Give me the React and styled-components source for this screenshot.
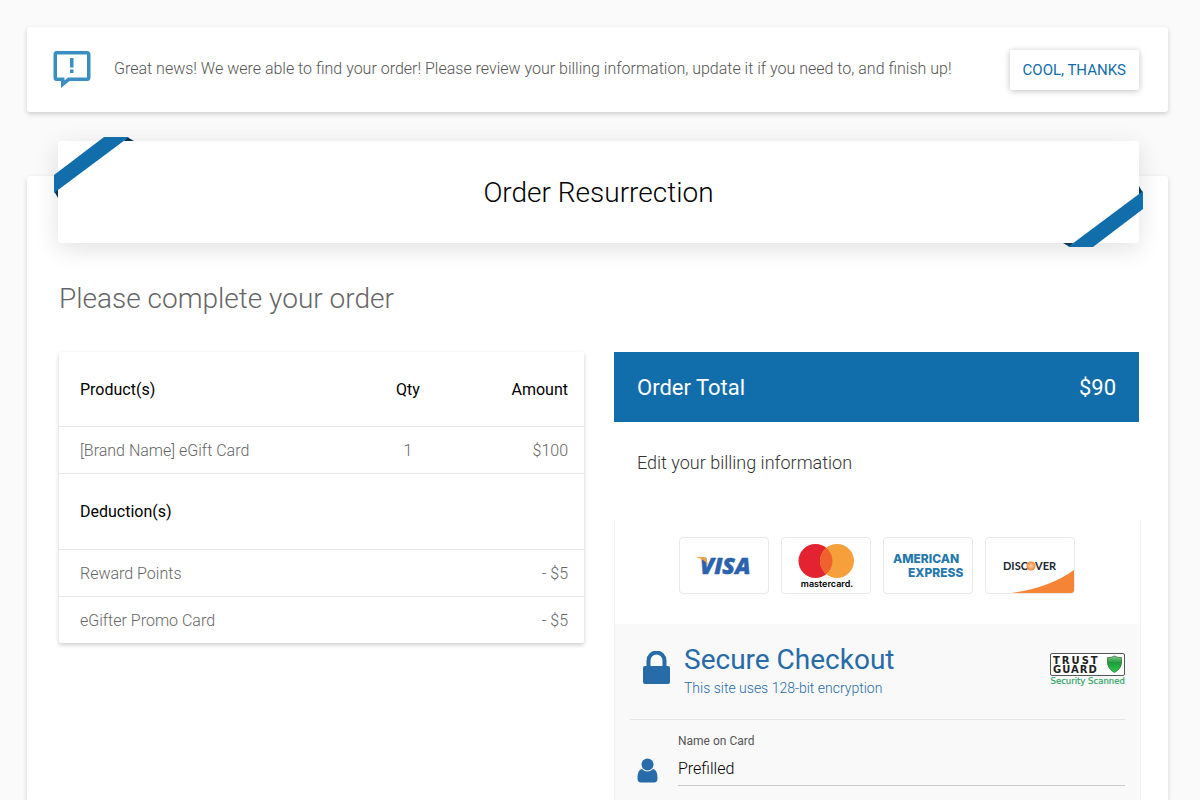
import styled, { createGlobalStyle } from "styled-components";

const GlobalStyle = createGlobalStyle`
  *, *::before, *::after {
    box-sizing: border-box;
  }

  body {
    margin: 0;
    background: #fafafa;
    color: #000;
    font-family: "Roboto", "Liberation Sans", sans-serif;
    font-size: 16px;
    line-height: 24px;
  }
`;

const Page = styled.div`
  min-height: 100vh;
  padding: 27px 32px 0 27px;
  display: flex;
  flex-direction: column;
  gap: 64px;
`;

const Notice = styled.section`
  display: flex;
  align-items: center;
  gap: 22px;
  padding: 23px 29px 22px 26px;
  border-radius: 3px;
  background: #fff;
  box-shadow: 0 2px 5px rgba(0, 0, 0, 0.18);
`;

const NoticeText = styled.p`
  flex: 1;
  margin: 0;
  padding-bottom: 2px;
  color: #555;
  font-weight: 300;
`;

const NoticeButton = styled.button`
  height: 40px;
  padding: 0 13px;
  border: none;
  border-radius: 2px;
  background: #fff;
  box-shadow: 0 1px 6px rgba(0, 0, 0, 0.25);
  color: #126eab;
  font-family: inherit;
  font-size: 15px;
  font-weight: 400;
  text-transform: uppercase;
  cursor: pointer;
`;

const Panel = styled.main`
  flex: 1;
  display: flex;
  flex-direction: column;
  padding: 0 29px 0 31px;
  border-radius: 3px 3px 0 0;
  background: #fff;
  box-shadow: 0 2px 5px rgba(0, 0, 0, 0.16);
`;

const Banner = styled.header`
  position: relative;
  margin-top: -35px;
  padding: 34px 24px 32px;
  border-radius: 3px;
  background: #fff;
  box-shadow: 0 6px 24px rgba(0, 0, 0, 0.12);
  text-align: center;
`;

const BannerTitle = styled.h1`
  margin: 0;
  font-size: 28px;
  font-weight: 300;
  line-height: 36px;
`;

const Ribbon = styled.svg`
  position: absolute;
  top: ${({ $end }) => ($end ? "auto" : "-4px")};
  left: ${({ $end }) => ($end ? "auto" : "-4px")};
  right: ${({ $end }) => ($end ? "-4px" : "auto")};
  bottom: ${({ $end }) => ($end ? "-4px" : "auto")};
  transform: ${({ $end }) => ($end ? "rotate(180deg)" : "none")};
`;

const SectionTitle = styled.h2`
  margin: 38px 0 0 1px;
  color: #666;
  font-size: 28px;
  font-weight: 300;
  line-height: 36px;
`;

const Columns = styled.div`
  flex: 1;
  display: grid;
  grid-template-columns: 1fr 1fr;
  gap: 30px;
  margin: 35px 0 0 1px;
`;

const OrderTable = styled.table`
  align-self: start;
  width: 100%;
  border-collapse: separate;
  border-spacing: 0;
  border-radius: 2px;
  box-shadow: 0 2px 4px rgba(0, 0, 0, 0.2);
`;

const Cell = styled.td`
  height: 47px;
  padding: 2px 16px 0 21px;
  border-top: 1px solid #e8e8e8;
  color: #666;
  font-weight: 300;
  text-align: ${({ $align }) => $align || "left"};
`;

const HeadCell = styled.th`
  height: ${({ $first }) => ($first ? "74px" : "76px")};
  padding: ${({ $first }) => ($first ? "2px" : "0")} 16px 0 21px;
  border-top: ${({ $first }) => ($first ? "none" : "1px solid #e8e8e8")};
  font-weight: 400;
  text-align: ${({ $align }) => $align || "left"};
`;

const ItemCol = styled.col`
  width: 60%;
`;

const QtyCol = styled.col`
  width: 12%;
`;

const Billing = styled.section`
  display: flex;
  flex-direction: column;
`;

const TotalBar = styled.div`
  display: flex;
  align-items: center;
  justify-content: space-between;
  height: 70px;
  padding: 2px 23px 0;
  background: #126eab;
  color: #fff;
  font-size: 22px;
`;

const BillingTitle = styled.h3`
  margin: 29px 23px 45px;
  color: #333;
  font-size: 18px;
  font-weight: 300;
  line-height: 24px;
`;

const PaymentCard = styled.div`
  flex: 1;
  display: flex;
  flex-direction: column;
  margin-right: -2px;
  border: solid #f0f0f0;
  border-width: 0 1px;
`;

const CardBrands = styled.ul`
  display: flex;
  justify-content: center;
  gap: 12px;
  margin: 0;
  padding: 17px 2px 30px 0;
  list-style: none;
`;

const Brand = styled.li`
  width: 90px;
  height: 57px;
  border: 1px solid #e9e9e9;
  border-radius: 4px;
  overflow: hidden;

  svg {
    display: block;
  }
`;

const Checkout = styled.div`
  flex: 1;
  padding: 0 15px;
  background: #f9f9f9;
`;

const CheckoutHeader = styled.div`
  display: flex;
  align-items: flex-start;
  padding: 19px 0 20px 13px;
  border-bottom: 1px solid #e6e6e6;
`;

const LockIcon = styled.svg`
  margin: 8px 14px 0 0;
`;

const CheckoutText = styled.div`
  flex: 1;
  color: #276ba8;
`;

const CheckoutTitle = styled.h3`
  margin: 0;
  font-size: 28px;
  font-weight: 400;
  line-height: 34px;
`;

const CheckoutNote = styled.p`
  margin: 1px 0;
  font-size: 14px;
  font-weight: 300;
  line-height: 20px;
`;

const TrustSeal = styled.svg`
  margin-top: 10px;
`;

const Field = styled.div`
  display: grid;
  grid-template-columns: 48px 1fr;
  padding-top: 12px;
`;

const FieldIcon = styled.div`
  grid-row: 2;
  padding: 8px 0 0 7px;
`;

const FieldLabel = styled.label`
  grid-column: 2;
  color: #555;
  font-size: 12px;
  line-height: 18px;
`;

const FieldInput = styled.input`
  width: 100%;
  height: 36px;
  padding: 2px 0 0;
  border: none;
  border-bottom: 1px solid #c8cacb;
  background: transparent;
  color: #000;
  font-family: inherit;
  font-size: 16px;
  font-weight: 300;
  outline: none;

  &:focus {
    border-bottom-color: #126eab;
  }
`;

const items = [{ name: "[Brand Name] eGift Card", qty: 1, amount: "$100" }];

const deductions = [
  { name: "Reward Points", amount: "- $5" },
  { name: "eGifter Promo Card", amount: "- $5" },
];

function NoticeIcon() {
  return (
    <svg width="39" height="40" viewBox="0 0 39 40" aria-hidden="true">
      <path
        fill="#3c8dc0"
        fillRule="evenodd"
        d="M3.500 1H34Q37.500 1 37.500 4.500V27.500Q37.500 31 34 31H16.500L8 38V31H3.500Q0.500 31 0.500 27.500V4.500Q0.500 1 3.500 1ZM4 4.500V27.500H11.500V30.500L15 27.500H34V4.500Z"
      />
      <path fill="#3c8dc0" d="M17 8h3.500v9.500h-3.500zM17 19.500h3.500v3.500h-3.500z" />
    </svg>
  );
}

function CornerRibbon({ end }) {
  return (
    <Ribbon $end={end} width="80" height="62" viewBox="0 0 80 62" aria-hidden="true">
      <path fill="#0b3551" d="M73 0L80 4H70zM0 54L4 61V52z" />
      <path fill="#126eab" d="M50 0H75L0 56V38z" />
    </Ribbon>
  );
}

function VisaLogo() {
  return (
    <svg width="88" height="55" viewBox="0 0 88 55" role="img" aria-label="Visa">
      <text
        x="20"
        y="36"
        fill="#2a62ad"
        stroke="#2a62ad"
        strokeWidth="0.500"
        fontFamily="Open Sans, sans-serif"
        fontSize="23"
        fontStyle="italic"
        fontWeight="800"
      >
        VISA
      </text>
      <path fill="#f0a03c" d="M17 19H23Q26 19 26.500 21L28 27Q24 21 17 19.500z" />
    </svg>
  );
}

function MastercardLogo() {
  return (
    <svg width="88" height="55" viewBox="0 0 88 55" role="img" aria-label="Mastercard">
      <circle cx="33.500" cy="23" r="17" fill="#e32430" />
      <circle cx="55" cy="23" r="17" fill="#f6a03c" />
      <path fill="#f0622d" d="M44.250 9.800A17 17 0 0 1 44.250 36.200A17 17 0 0 1 44.250 9.800z" />
      <text x="45" y="49" textAnchor="middle" fontFamily="Inter, sans-serif" fontSize="9" fontWeight="600">
        mastercard.
      </text>
    </svg>
  );
}

function AmexLogo() {
  return (
    <svg width="88" height="55" viewBox="0 0 88 55" role="img" aria-label="American Express">
      <g fill="#2478ad" fontFamily="Inter, sans-serif" fontSize="12" fontWeight="800">
        <text x="9" y="24.500">AMERICAN</text>
        <text x="24" y="39">EXPRESS</text>
      </g>
    </svg>
  );
}

function DiscoverLogo() {
  return (
    <svg width="88" height="55" viewBox="0 0 88 55" role="img" aria-label="Discover">
      <defs>
        <radialGradient id="discover-sun">
          <stop offset="0" stopColor="#fbd3b0" />
          <stop offset="1" stopColor="#f28333" />
        </radialGradient>
      </defs>
      <path fill="#f58436" d="M25 55Q63 50 88 32V55z" />
      <g fill="#20262c" fontFamily="Lato, sans-serif" fontSize="11" fontWeight="700">
        <text x="17" y="32">DISC</text>
        <text x="49" y="32">VER</text>
      </g>
      <circle cx="45" cy="28" r="4.500" fill="url(#discover-sun)" />
    </svg>
  );
}

function TrustGuard() {
  return (
    <TrustSeal width="75" height="36" viewBox="0 0 75 36" role="img" aria-label="Trust Guard Security Scanned">
      <defs>
        <linearGradient id="shield-fill" x1="0" y1="0" x2="0" y2="1">
          <stop offset="0" stopColor="#7fd08a" />
          <stop offset="0.400" stopColor="#1f9a3c" />
          <stop offset="1" stopColor="#27d043" />
        </linearGradient>
      </defs>
      <rect x="0.500" y="0.500" width="74" height="22" rx="1.500" fill="#fff" stroke="#555" />
      <g fill="#222" fontFamily="DejaVu Sans, sans-serif" fontSize="10" fontWeight="700">
        <text x="3" y="11" letterSpacing="2">TRUST</text>
        <text x="3" y="20" letterSpacing="1">GUARD</text>
      </g>
      <path
        fill="url(#shield-fill)"
        stroke="#3a5f41"
        strokeWidth="0.700"
        d="M57.500 4.500Q61 5 64.500 3Q68 5 71.500 4.500V10Q71 16 64.500 19.500Q58 16 57.500 10z"
      />
      <text x="0.500" y="31" fill="#2fa367" stroke="#2fa367" strokeWidth="0.200" fontFamily="DejaVu Sans, sans-serif" fontSize="8.500">
        Security Scanned
      </text>
    </TrustSeal>
  );
}

function OrderSummary() {
  return (
    <OrderTable>
      <colgroup>
        <ItemCol />
        <QtyCol />
        <col />
      </colgroup>
      <thead>
        <tr>
          <HeadCell $first scope="col">Product(s)</HeadCell>
          <HeadCell $first scope="col" $align="center">Qty</HeadCell>
          <HeadCell $first scope="col" $align="right">Amount</HeadCell>
        </tr>
      </thead>
      <tbody>
        {items.map((item) => (
          <tr key={item.name}>
            <Cell>{item.name}</Cell>
            <Cell $align="center">{item.qty}</Cell>
            <Cell $align="right">{item.amount}</Cell>
          </tr>
        ))}
        <tr>
          <HeadCell scope="colgroup" colSpan={3}>Deduction(s)</HeadCell>
        </tr>
        {deductions.map((item) => (
          <tr key={item.name}>
            <Cell colSpan={2}>{item.name}</Cell>
            <Cell $align="right">{item.amount}</Cell>
          </tr>
        ))}
      </tbody>
    </OrderTable>
  );
}

function BillingForm() {
  return (
    <PaymentCard>
      <CardBrands>
        <Brand><VisaLogo /></Brand>
        <Brand><MastercardLogo /></Brand>
        <Brand><AmexLogo /></Brand>
        <Brand><DiscoverLogo /></Brand>
      </CardBrands>
      <Checkout>
        <CheckoutHeader>
          <LockIcon width="27" height="33" viewBox="0 0 27 33" aria-hidden="true">
            <path d="M5.500 16V9.500a8 8 0 0 1 16 0V16" fill="none" stroke="#276ba8" strokeWidth="4" />
            <rect y="15" width="27" height="18" rx="2" fill="#276ba8" />
          </LockIcon>
          <CheckoutText>
            <CheckoutTitle>Secure Checkout</CheckoutTitle>
            <CheckoutNote>This site uses 128-bit encryption</CheckoutNote>
          </CheckoutText>
          <TrustGuard />
        </CheckoutHeader>
        <Field>
          <FieldLabel htmlFor="card-name">Name on Card</FieldLabel>
          <FieldIcon>
            <svg width="21" height="25" viewBox="0 0 21 25" aria-hidden="true">
              <path
                fill="#276ba8"
                d="M5 11Q7.500 13.500 10.500 13.500T16 11Q20.500 11.500 20.500 20.500Q20.500 24.500 17 24.500H4Q0.500 24.500 0.500 20.500Q0.500 11.500 5 11z"
              />
              <circle cx="10.500" cy="6.500" r="6" fill="#276ba8" />
            </svg>
          </FieldIcon>
          <FieldInput id="card-name" type="text" defaultValue="Prefilled" />
        </Field>
      </Checkout>
    </PaymentCard>
  );
}

export default function App() {
  return (
    <>
      <GlobalStyle />
      <Page>
        <Notice>
          <NoticeIcon />
          <NoticeText>
            Great news! We were able to find your order! Please review your billing information, update it if you need
            to, and finish up!
          </NoticeText>
          <NoticeButton type="button">Cool, thanks</NoticeButton>
        </Notice>
        <Panel>
          <Banner>
            <CornerRibbon />
            <BannerTitle>Order Resurrection</BannerTitle>
            <CornerRibbon end />
          </Banner>
          <SectionTitle>Please complete your order</SectionTitle>
          <Columns>
            <OrderSummary />
            <Billing>
              <TotalBar>
                <span>Order Total</span>
                <span>$90</span>
              </TotalBar>
              <BillingTitle>Edit your billing information</BillingTitle>
              <BillingForm />
            </Billing>
          </Columns>
        </Panel>
      </Page>
    </>
  );
}
